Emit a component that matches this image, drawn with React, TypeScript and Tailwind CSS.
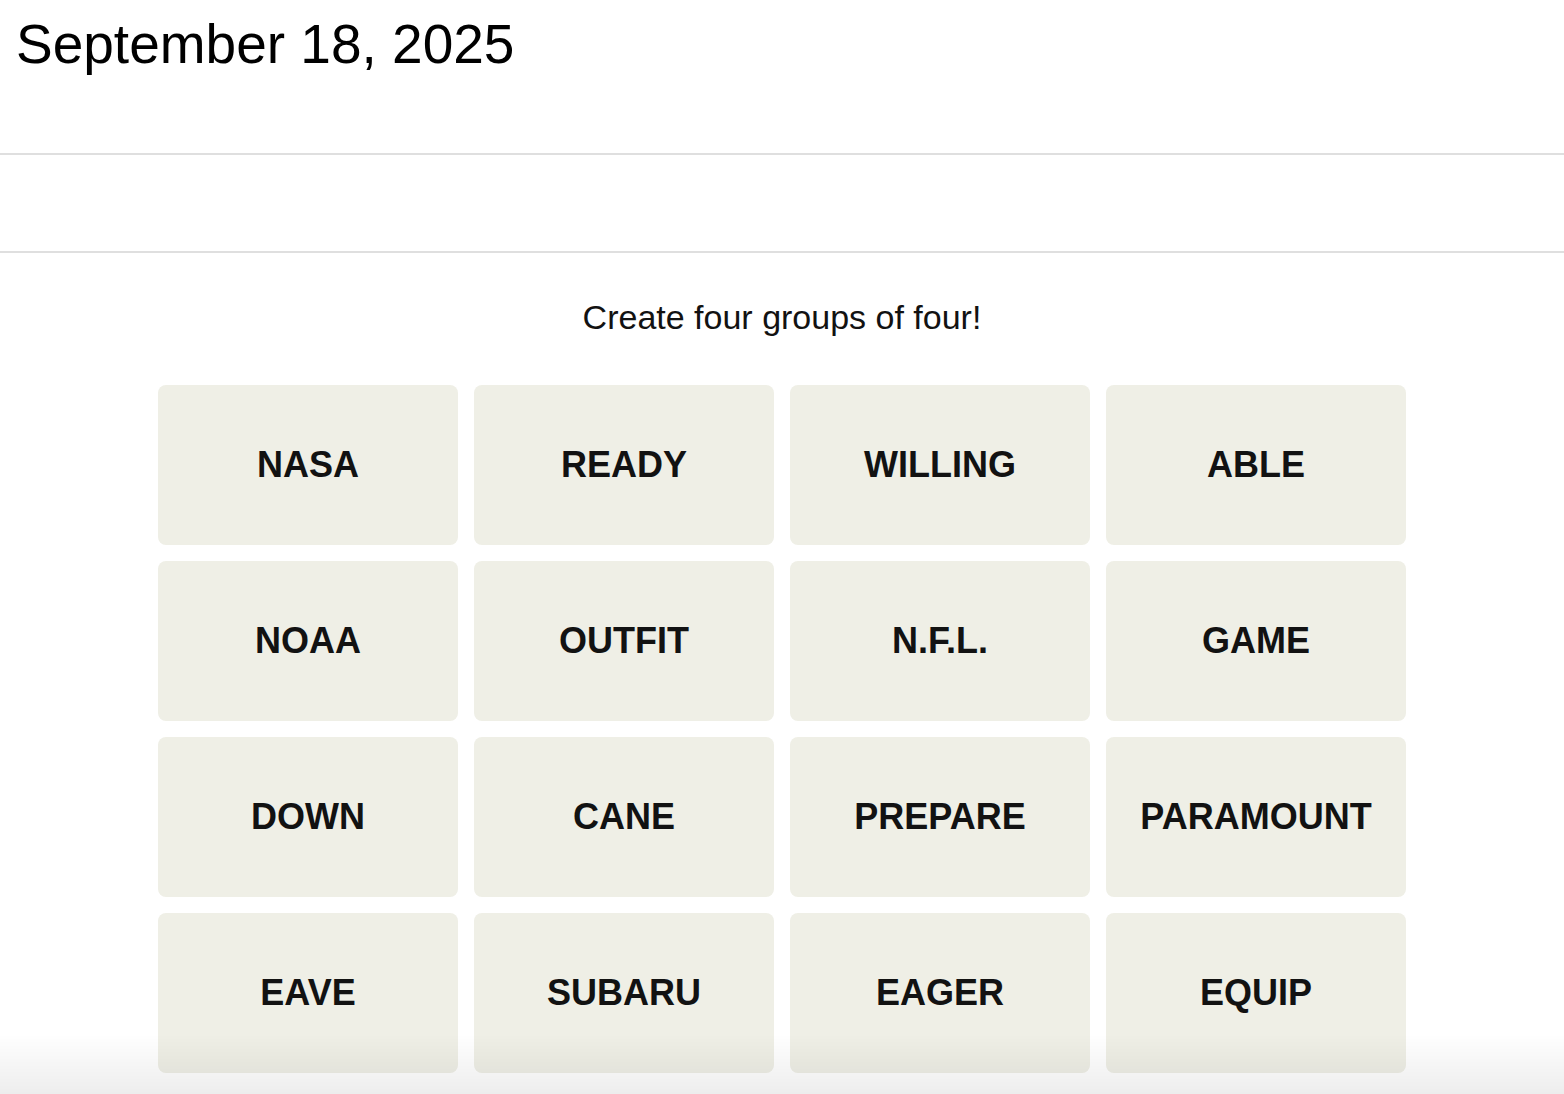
import React from 'react';

const words: string[] = [
  'NASA', 'READY', 'WILLING', 'ABLE',
  'NOAA', 'OUTFIT', 'N.F.L.', 'GAME',
  'DOWN', 'CANE', 'PREPARE', 'PARAMOUNT',
  'EAVE', 'SUBARU', 'EAGER', 'EQUIP',
];

const Tile: React.FC<{ word: string }> = ({ word }) => (
  <button className="h-[160px] rounded-[8px] bg-[#efefe6] flex items-center justify-center text-[36px] font-bold text-[#121212] uppercase">
    {word}
  </button>
);

export default function App() {
  return (
    <div
      className="relative min-h-screen bg-white text-black"
      style={{ fontFamily: '"Liberation Sans", Arial, sans-serif' }}
    >
      <header className="pl-[16px] pt-[13px] h-[153px]">
        <h1 className="text-[55px] leading-[62px] font-normal">September 18, 2025</h1>
      </header>
      <div className="border-t-2 border-[#dfdfdf] h-[98px]" />
      <main className="border-t-2 border-[#dfdfdf] pt-[44px] pb-[40px]">
        <p className="text-center text-[34px] leading-[40px] text-[#121212]">Create four groups of four!</p>
        <div className="mx-auto mt-[48px] w-[1248px] grid grid-cols-4 gap-[16px]">
          {words.map((w) => (
            <Tile key={w} word={w} />
          ))}
        </div>
      </main>
      <div className="pointer-events-none fixed left-0 right-0 bottom-0 h-[60px] bg-gradient-to-b from-transparent to-[rgba(0,0,0,0.07)]" />
    </div>
  );
}
